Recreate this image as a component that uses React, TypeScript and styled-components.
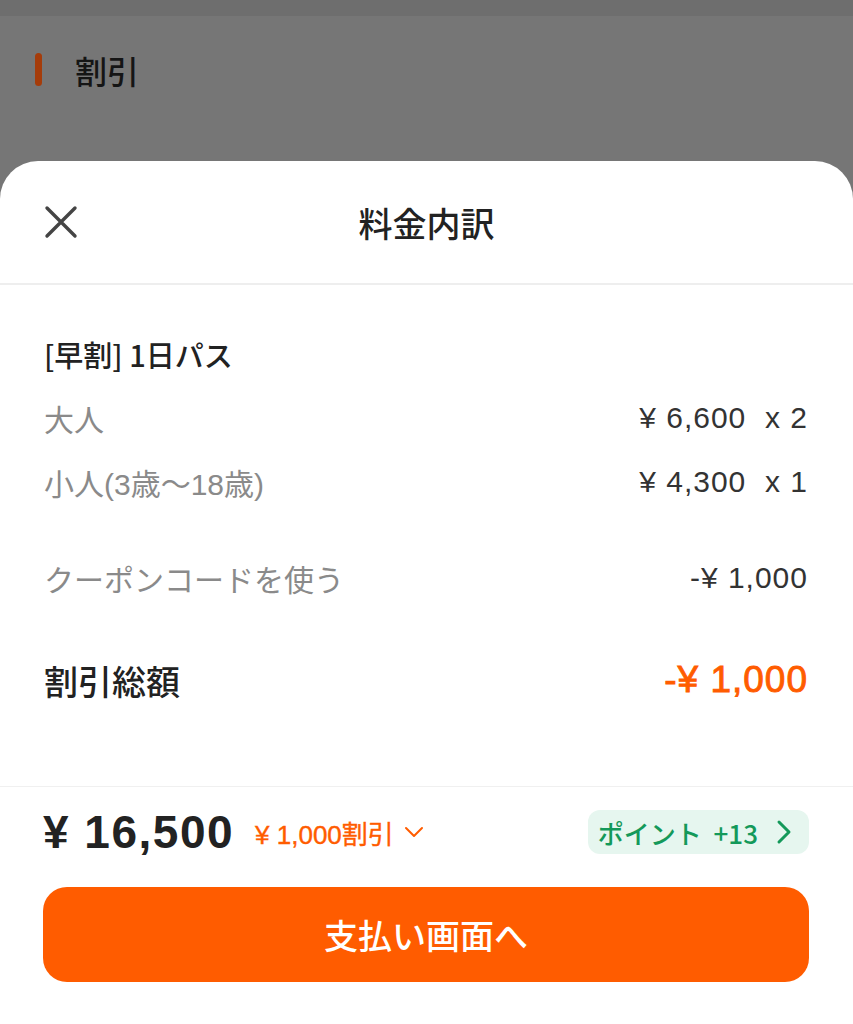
import React from 'react'
import styled, { createGlobalStyle } from 'styled-components'

const GlobalStyle = createGlobalStyle`
  html, body {
    margin: 0;
    padding: 0;
  }
  body {
    font-family: 'Liberation Sans', 'Noto Sans CJK JP', sans-serif;
    -webkit-font-smoothing: antialiased;
  }
`

const Page = styled.div`
  position: relative;
  width: 853px;
  height: 1024px;
  overflow: hidden;
  background: #767676;
`

const TopBand = styled.div`
  height: 16px;
  background: #6e6e6e;
`

const SectionHeading = styled.div`
  display: flex;
  align-items: center;
  gap: 33px;
  margin: 37px 0 0 35px;
  height: 33px;
`

const SectionBar = styled.span`
  width: 7px;
  height: 33px;
  border-radius: 4px;
  background: #a53c0a;
`

const SectionTitle = styled.h2`
  margin: 0;
  font-size: 32px;
  font-weight: 500;
  color: #151515;
`

const PeekText = styled.p`
  margin: 73px 0 0 44px;
  font-size: 30px;
  line-height: 36px;
  color: #1a1a1a;
  white-space: nowrap;
`

const Sheet = styled.div`
  position: absolute;
  top: 161px;
  left: 0;
  right: 0;
  bottom: 0;
  display: flex;
  flex-direction: column;
  background: #fff;
  border-radius: 38px 38px 0 0;
`

const Header = styled.div`
  display: grid;
  grid-template-columns: 1fr auto 1fr;
  align-items: center;
  height: 122px;
  padding: 0 44px;
  border-bottom: 2px solid #eeeeee;
`

const CloseButton = styled.button`
  display: flex;
  align-items: center;
  justify-content: flex-start;
  width: 34px;
  height: 34px;
  padding: 0;
  border: none;
  background: none;
  color: #444;
`

const Title = styled.h1`
  margin: 0;
  font-size: 34px;
  font-weight: 500;
  color: #222;
`

const Body = styled.div`
  display: flex;
  flex-direction: column;
  padding: 53px 45px 0 44px;
  flex: 1;
`

const ProductTitle = styled.h3`
  margin: 0 0 16px;
  font-family: 'Noto Sans CJK JP', sans-serif;
  font-size: 29px;
  line-height: 32px;
  font-weight: 500;
  color: #222;
`

const Row = styled.div<{ gapTop?: number }>`
  display: flex;
  align-items: center;
  justify-content: space-between;
  height: 64px;
  margin-top: ${props => props.gapTop || 0}px;
`

const Label = styled.span<{ strong?: boolean }>`
  font-size: ${props => (props.strong ? 34 : 30)}px;
  font-weight: ${props => (props.strong ? 500 : 400)};
  color: ${props => (props.strong ? '#222' : '#8a8a8a')};
`

const Value = styled.span<{ accent?: boolean }>`
  font-size: ${props => (props.accent ? 37 : 30)}px;
  letter-spacing: 1px;
  color: ${props => (props.accent ? '#ff5c00' : '#333')};
  -webkit-text-stroke: ${props => (props.accent ? '0.9px' : '0')} currentColor;
  white-space: pre;
`

const Footer = styled.div`
  display: flex;
  flex-direction: column;
  padding: 0 44px 42px 43px;
  border-top: 1px solid #f0f0f0;
`

const PriceRow = styled.div`
  display: flex;
  align-items: center;
  height: 90px;
`

const Total = styled.span`
  font-size: 46px;
  font-weight: 700;
  color: #222;
  letter-spacing: 1.5px;
`

const DiscountToggle = styled.span`
  display: flex;
  align-items: center;
  gap: 10px;
  margin-left: 21px;
  font-size: 26px;
  color: #ff5c00;
  -webkit-text-stroke: 0.4px currentColor;
`

const PointsBadge = styled.span`
  display: flex;
  align-items: center;
  gap: 18px;
  margin-left: auto;
  height: 44px;
  padding: 0 17px 0 10px;
  border-radius: 12px;
  background: #e6f6ef;
  color: #14995a;
  font-family: 'Noto Sans CJK JP', sans-serif;
  font-size: 26px;
  font-weight: 500;
  white-space: pre;
`

const PayButton = styled.button`
  height: 95px;
  margin-top: 10px;
  border: none;
  border-radius: 24px;
  background: #ff5c00;
  color: #fff;
  font-family: inherit;
  font-size: 34px;
  font-weight: 500;
`

const lines = [
  { label: '大人', value: '¥ 6,600  x 2' },
  { label: '小人(3歳〜18歳)', value: '¥ 4,300  x 1' },
]

export default function App() {
  return (
    <Page>
      <GlobalStyle />
      <TopBand />
      <SectionHeading>
        <SectionBar />
        <SectionTitle>割引</SectionTitle>
      </SectionHeading>
      <PeekText>予約時にご利用いただけるポイント・クーポン</PeekText>

      <Sheet>
        <Header>
          <CloseButton aria-label="close">
            <svg width="34" height="34" viewBox="0 0 34 34">
              <path d="M3 3 L31 31 M31 3 L3 31" stroke="currentColor" strokeWidth="3.4" strokeLinecap="round" />
            </svg>
          </CloseButton>
          <Title>料金内訳</Title>
          <span />
        </Header>

        <Body>
          <ProductTitle>[早割] 1日パス</ProductTitle>
          {lines.map(line => (
            <Row key={line.label}>
              <Label>{line.label}</Label>
              <Value>{line.value}</Value>
            </Row>
          ))}
          <Row gapTop={32}>
            <Label>クーポンコードを使う</Label>
            <Value>-¥ 1,000</Value>
          </Row>
          <Row gapTop={38}>
            <Label strong>割引総額</Label>
            <Value accent>-¥ 1,000</Value>
          </Row>
        </Body>

        <Footer>
          <PriceRow>
            <Total>¥ 16,500</Total>
            <DiscountToggle>
              ¥ 1,000割引
              <svg width="20" height="12" viewBox="0 0 20 12">
                <path d="M2 2 L10 10 L18 2" fill="none" stroke="currentColor" strokeWidth="2" strokeLinecap="round" strokeLinejoin="round" />
              </svg>
            </DiscountToggle>
            <PointsBadge>
              ポイント  +13
              <svg width="16" height="26" viewBox="0 0 16 26">
                <path d="M3 3 L13 13 L3 23" fill="none" stroke="currentColor" strokeWidth="3" strokeLinecap="round" strokeLinejoin="round" />
              </svg>
            </PointsBadge>
          </PriceRow>
          <PayButton>支払い画面へ</PayButton>
        </Footer>
      </Sheet>
    </Page>
  )
}
